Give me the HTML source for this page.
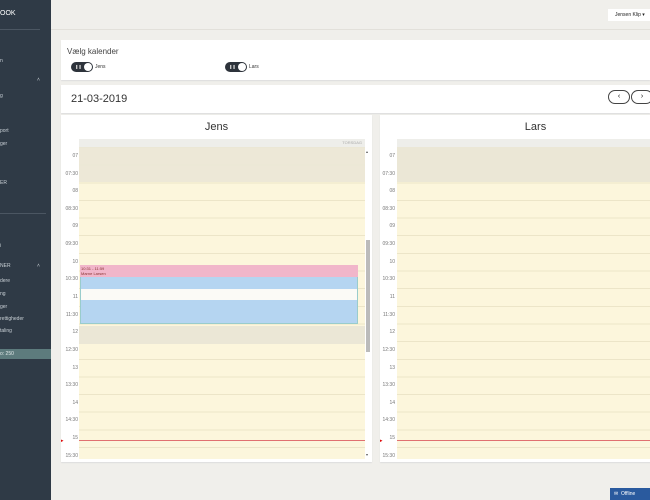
<!DOCTYPE html>
<html><head><meta charset="utf-8"><style>
*{margin:0;padding:0;box-sizing:border-box}
body{width:650px;height:500px;overflow:hidden;background:#f0efeb;font-family:"Liberation Sans",sans-serif;position:relative}
.sb{position:absolute;left:0;top:0;width:51px;height:500px;background:#2f3a46;color:#c9d0d6;font-size:5px}
.sb div{position:absolute;left:0;white-space:nowrap}
.hl{position:absolute;left:0;top:349px;width:51px;height:10px;background:#5d7b7d}
.a{position:absolute}
.card{position:absolute;background:#fff;box-shadow:0 1px 1px #ddd}
.lbl{position:absolute;width:17px;text-align:right;font-size:5px;color:#777}
.grid{position:absolute;background-color:#fcf6dc;background-image:repeating-linear-gradient(to bottom,#ece5c8 0,#ece5c8 1px,transparent 1px,transparent 17.65px)}
.tog{position:absolute;width:22px;height:10px;border-radius:5px;background:#2d333b}
.tog:after{content:"";position:absolute;right:1px;top:1px;width:8px;height:8px;border-radius:50%;background:#fff}
.tog span{position:absolute;left:4px;top:2px;font-size:4px;color:#ccc}
</style></head><body>
<div class="sb">
<div style="top:10px;color:#fff;font-size:7px">OOK</div>
<div style="top:29px;width:40px;border-top:1px solid #4b5662"></div>
<div style="top:58px">n</div>
<div style="top:77px;left:37px">˄</div>
<div style="top:93px">g</div>
<div style="top:128px">port</div>
<div style="top:141px">ger</div>
<div style="top:180px">ER</div>
<div style="top:213px;width:46px;border-top:1px solid #4b5662"></div>
<div style="top:243px">i</div>
<div style="top:263px">NER</div><div style="top:263px;left:37px">˄</div>
<div style="top:278px">dere</div>
<div style="top:291px">ng</div>
<div style="top:304px">ger</div>
<div style="top:316px">rettigheder</div>
<div style="top:328px">taling</div>
</div>
<div class="hl"></div><div class="a" style="top:351px;left:0;font-size:5px;color:#e0e8e8">o: 250</div>
<div class="a" style="left:51px;top:29px;width:599px;border-top:1px solid #e2e0da"></div>
<div class="a" style="left:608px;top:9px;width:42px;height:12px;background:#fff;font-size:5px;line-height:12px;padding-left:7px;color:#222">Jensen Klip ▾</div>

<div class="card" style="left:61px;top:40px;width:589px;height:40px">
<div class="a" style="left:6px;top:7px;font-size:8px;color:#444">Vælg kalender</div>
<div class="tog" style="left:10px;top:22px"><span>❚❚</span></div><div class="a" style="left:34px;top:24px;font-size:5px;color:#333">Jens</div>
<div class="tog" style="left:164px;top:22px"><span>❚❚</span></div><div class="a" style="left:188px;top:24px;font-size:5px;color:#333">Lars</div>
</div>
<div class="card" style="left:61px;top:85px;width:589px;height:28px">
<div class="a" style="left:10px;top:8px;font-size:11px;color:#333">21-03-2019</div>
<div class="a" style="left:547px;top:5px;width:22px;height:14px;border:1px solid #444;border-radius:7px;font-size:7px;text-align:center;line-height:12px">‹</div>
<div class="a" style="left:570px;top:5px;width:22px;height:14px;border:1px solid #444;border-radius:7px;font-size:7px;text-align:center;line-height:12px">›</div>
</div>

<!-- Jens -->
<div class="card" style="left:61px;top:115px;width:311px;height:347px">
<div class="a" style="left:0;width:311px;top:6px;text-align:center;font-size:11px;color:#333">Jens</div>
<div class="a" style="left:18px;top:24px;width:286px;height:8px;background:#eeeeea;font-size:4px;color:#aaa;text-align:right;padding-right:3px;line-height:8px">TORSDAG</div>
<div class="grid" style="left:18px;top:32px;width:286px;height:312px"></div>
<div class="a" style="left:18px;top:32px;width:286px;height:35px;background:#ebe7d6;opacity:.9"></div>
<div class="a" style="left:18px;top:211px;width:286px;height:18px;background:#ebe7d6"></div>
<div class="a" style="left:19px;top:150px;width:278px;height:59px;background:#b5d5f1;border:1px solid #9cc"></div>
<div class="a" style="left:19px;top:150px;width:278px;height:12px;background:#f1b6ca;font-size:4px;color:#833;padding:1px">10:31 - 11:59<br>Marne Larsen</div>
<div class="a" style="left:20px;top:174px;width:276px;height:11px;background:#fbfaf6"></div>
<div class="a" style="left:18px;top:325px;width:286px;height:1px;background:#e07070"></div>
<div class="a" style="left:0;top:323px;font-size:5px;color:#d00">▸</div>
<div class="a" style="left:305px;top:125px;width:4px;height:112px;background:#bbb"></div>
<div class="a" style="left:305px;top:34px;font-size:4px;color:#555">▴</div>
<div class="a" style="left:305px;top:337px;font-size:4px;color:#555">▾</div>
<div class="lbl" style="top:38px">07</div><div class="lbl" style="top:56px">07:30</div>
<div class="lbl" style="top:73px">08</div><div class="lbl" style="top:91px">08:30</div>
<div class="lbl" style="top:108px">09</div><div class="lbl" style="top:126px">09:30</div>
<div class="lbl" style="top:144px">10</div><div class="lbl" style="top:161px">10:30</div>
<div class="lbl" style="top:179px">11</div><div class="lbl" style="top:197px">11:30</div>
<div class="lbl" style="top:214px">12</div><div class="lbl" style="top:232px">12:30</div>
<div class="lbl" style="top:250px">13</div><div class="lbl" style="top:267px">13:30</div>
<div class="lbl" style="top:285px">14</div><div class="lbl" style="top:302px">14:30</div>
<div class="lbl" style="top:320px">15</div><div class="lbl" style="top:338px">15:30</div>
</div>

<!-- Lars -->
<div class="card" style="left:380px;top:115px;width:280px;height:347px">
<div class="a" style="left:0;width:311px;top:6px;text-align:center;font-size:11px;color:#333">Lars</div>
<div class="a" style="left:17px;top:24px;width:263px;height:8px;background:#eeeeea"></div>
<div class="grid" style="left:17px;top:32px;width:263px;height:312px"></div>
<div class="a" style="left:17px;top:32px;width:263px;height:35px;background:#ebe7d6"></div>
<div class="a" style="left:17px;top:325px;width:263px;height:1px;background:#e07070"></div>
<div class="a" style="left:0;top:323px;font-size:5px;color:#d00">▸</div>
<div class="lbl" style="top:38px;width:15px">07</div><div class="lbl" style="top:56px;width:15px">07:30</div>
<div class="lbl" style="top:73px;width:15px">08</div><div class="lbl" style="top:91px;width:15px">08:30</div>
<div class="lbl" style="top:108px;width:15px">09</div><div class="lbl" style="top:126px;width:15px">09:30</div>
<div class="lbl" style="top:144px;width:15px">10</div><div class="lbl" style="top:161px;width:15px">10:30</div>
<div class="lbl" style="top:179px;width:15px">11</div><div class="lbl" style="top:197px;width:15px">11:30</div>
<div class="lbl" style="top:214px;width:15px">12</div><div class="lbl" style="top:232px;width:15px">12:30</div>
<div class="lbl" style="top:250px;width:15px">13</div><div class="lbl" style="top:267px;width:15px">13:30</div>
<div class="lbl" style="top:285px;width:15px">14</div><div class="lbl" style="top:302px;width:15px">14:30</div>
<div class="lbl" style="top:320px;width:15px">15</div><div class="lbl" style="top:338px;width:15px">15:30</div>
</div>

<div class="a" style="left:610px;top:488px;width:40px;height:12px;background:#2a5a9e;color:#fff;font-size:5px;line-height:12px;padding-left:4px">✉ &nbsp;Offline</div>
</body></html>
